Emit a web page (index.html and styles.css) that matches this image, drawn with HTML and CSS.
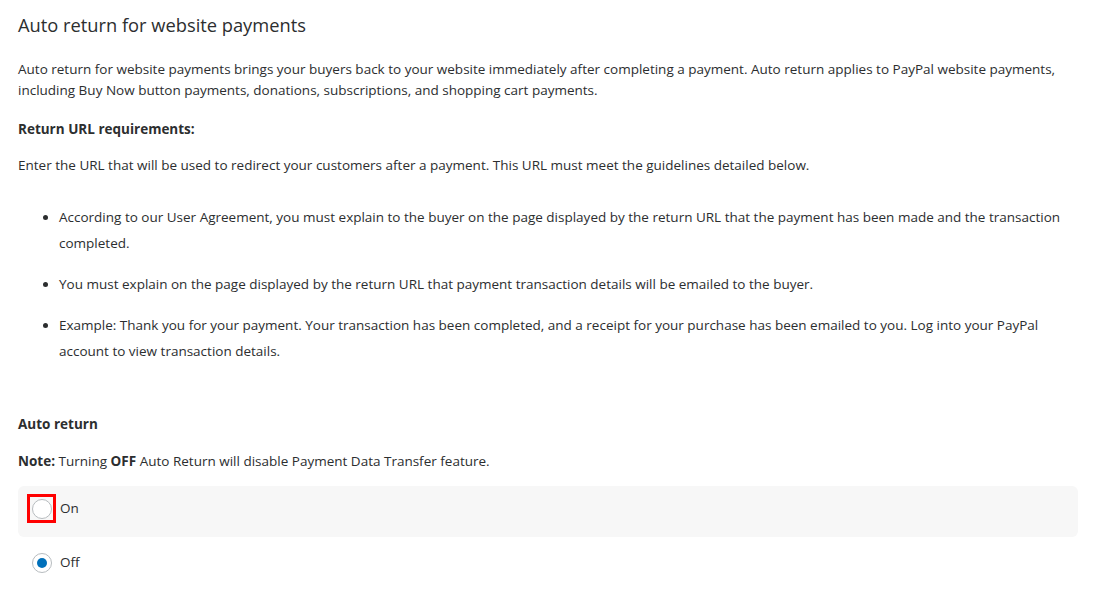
FILE: index.html
```html
<!DOCTYPE html>
<html lang="en">
<head>
<meta charset="utf-8">
<title>Auto return for website payments</title>
<link rel="stylesheet" href="styles.css">
</head>
<body>
<main class="page">
  <h1 class="title">Auto return for website payments</h1>
  <p class="intro">Auto return for website payments brings your buyers back to your website immediately after completing a payment. Auto return applies to PayPal website payments, including Buy Now button payments, donations, subscriptions, and shopping cart payments.</p>
  <h2 class="sub">Return URL requirements:</h2>
  <p class="text">Enter the URL that will be used to redirect your customers after a payment. This URL must meet the guidelines detailed below.</p>
  <ul class="list">
    <li>According to our User Agreement, you must explain to the buyer on the page displayed by the return URL that the payment has been made and the transaction completed.</li>
    <li>You must explain on the page displayed by the return URL that payment transaction details will be emailed to the buyer.</li>
    <li>Example: Thank you for your payment. Your transaction has been completed, and a receipt for your purchase has been emailed to you. Log into your PayPal account to view transaction details.</li>
  </ul>
  <h2 class="sub sub-auto">Auto return</h2>
  <p class="note"><b>Note:</b> Turning <b>OFF</b> Auto Return will disable Payment Data Transfer feature.</p>
  <div class="options">
    <label class="option option-hover">
      <span class="focus"><span class="radio"></span></span>
      <span class="label">On</span>
    </label>
    <label class="option">
      <span class="focus plain"><span class="radio checked"></span></span>
      <span class="label">Off</span>
    </label>
  </div>
</main>
</body>
</html>
```

FILE: styles.css
```css
* { box-sizing: border-box; }
html, body { margin: 0; padding: 0; background: #fff; }
body {
  font-family: "Open Sans", "Noto Sans", Arial, sans-serif;
  color: #2c2e2f;
  font-size: 13.5px;
}
.page { padding: 0 28px 0 18px; }
.title {
  margin: 0;
  padding-top: 12px;
  font-size: 18.3px;
  font-weight: 400;
  line-height: 26px;
  color: #2c2e2f;
}
.intro {
  margin: 21px 0 0;
  line-height: 21px;
}
.sub {
  margin: 18px 0 0;
  font-size: 13.5px;
  font-weight: 700;
  line-height: 20px;
}
.text { margin: 16px 0 0; line-height: 20px; }
.list {
  margin: 29px 0 0;
  padding-left: 41px;
}
.list li {
  line-height: 26px;
  margin-bottom: 15px;
}
.list li:last-child { margin-bottom: 0; }
.sub-auto { margin-top: 50px; }
.note { margin: 17px 0 0; line-height: 20px; }
.options { margin-top: 15px; display: flex; flex-direction: column; gap: 3px; }
.option {
  display: flex;
  align-items: flex-start;
  height: 51px;
  padding: 8px 0 0 9px;
  border-radius: 6px;
}
.option-hover { background: #f7f7f7; }
.focus {
  width: 29px;
  height: 29px;
  border: 3px solid #ff0000;
  display: flex;
  align-items: center;
  justify-content: center;
}
.focus.plain { border-color: transparent; }
.radio {
  width: 20px;
  height: 20px;
  border-radius: 50%;
  border: 1px solid #b7bcbf;
  background: #fff;
  position: relative;
}
.radio.checked::after {
  content: "";
  position: absolute;
  left: 4px; top: 4px;
  width: 10px; height: 10px;
  border-radius: 50%;
  background: #0070ba;
}
.label { margin-left: 4px; line-height: 29px; }
```
